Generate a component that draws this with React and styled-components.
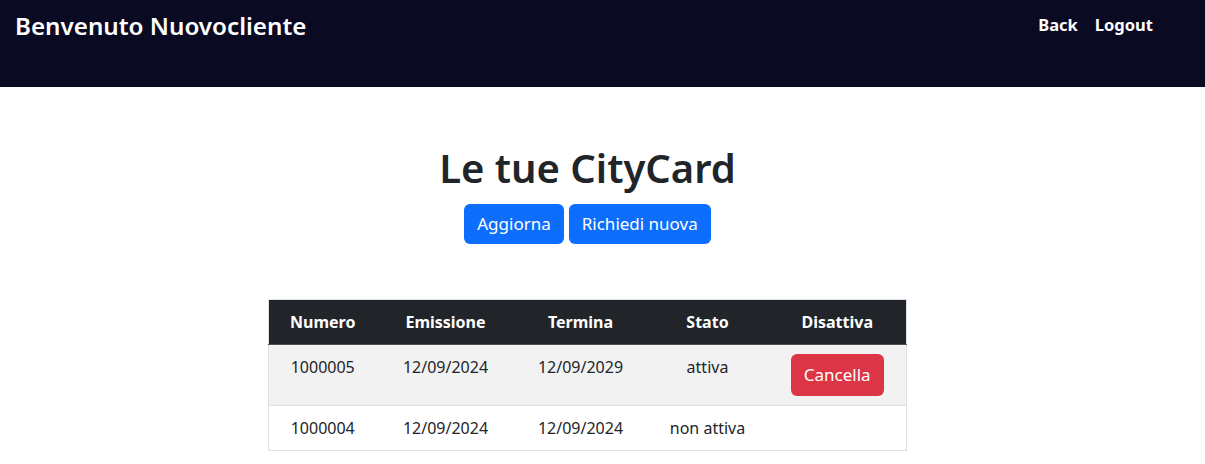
import React from "react";
import styled, { createGlobalStyle } from "styled-components";

const Global = createGlobalStyle`
  html, body { margin: 0; padding: 0; background: #fff; }
  body { font-family: "Noto Sans", "Open Sans", sans-serif; color: #212529; }
  * { box-sizing: border-box; }
`;

const Nav = styled.header`
  height: 87px;
  background: #0a0a23;
  display: flex;
  justify-content: space-between;
  align-items: flex-start;
  padding: 0 52px 0 15px;
`;

const Brand = styled.h2`
  margin: 8px 0 0;
  font-size: 24.2px;
  font-weight: 600;
  line-height: 36px;
  color: #fff;
`;

const NavLinks = styled.nav`
  display: flex;
  gap: 17px;
  margin-top: 12px;
`;

const NavLink = styled.a`
  color: #fff;
  font-weight: 700;
  font-size: 16.5px;
  line-height: 26px;
  text-decoration: none;
  cursor: pointer;
`;

const Main = styled.main`
  display: flex;
  flex-direction: column;
  align-items: center;
  padding: 56px 30px 0 0;
`;

const Title = styled.h1`
  margin: 0 0 11px;
  font-size: 40px;
  font-weight: 600;
  line-height: 50px;
  color: #212529;
`;

const ButtonRow = styled.div`
  display: flex;
  gap: 5px;
`;

const Button = styled.button`
  font-family: inherit;
  font-size: 17px;
  line-height: 24px;
  height: ${(p) => (p.$tall ? "42px" : "40px")};
  padding: 0 13px;
  border: none;
  border-radius: 6px;
  color: #fff;
  background: ${(p) => (p.$variant === "danger" ? "#dc3545" : "#0d6efd")};
  cursor: pointer;
`;

const Table = styled.table`
  margin-top: 55px;
  border-collapse: collapse;
  border: 1px solid #dee2e6;
  table-layout: fixed;
  width: 638px;
  font-size: 16px;
`;

const Th = styled.th`
  background: #212529;
  color: #fff;
  font-weight: 700;
  padding: 9px 4px;
  line-height: 26px;
  text-align: center;
  border-bottom: 1px solid #4d5154;
`;

const Row = styled.tr`
  background: ${(p) => (p.$striped ? "#f2f2f2" : "#fff")};
  border-bottom: 1px solid #dee2e6;
`;

const Td = styled.td`
  padding: 9px 4px;
  line-height: 26px;
  text-align: center;
  vertical-align: top;
  color: #212529;
`;

const widths = [108, 138, 132, 122, 138];
const headers = ["Numero", "Emissione", "Termina", "Stato", "Disattiva"];
const cards = [
  { n: "1000005", e: "12/09/2024", t: "12/09/2029", s: "attiva", active: true },
  { n: "1000004", e: "12/09/2024", t: "12/09/2024", s: "non attiva", active: false },
];

export default function App() {
  return (
    <>
      <Global />
      <Nav>
        <Brand>Benvenuto Nuovocliente</Brand>
        <NavLinks>
          <NavLink>Back</NavLink>
          <NavLink>Logout</NavLink>
        </NavLinks>
      </Nav>
      <Main>
        <Title>Le tue CityCard</Title>
        <ButtonRow>
          <Button>Aggiorna</Button>
          <Button>Richiedi nuova</Button>
        </ButtonRow>
        <Table>
          <colgroup>
            {widths.map((w, i) => (
              <col key={i} style={{ width: w }} />
            ))}
          </colgroup>
          <thead>
            <tr>
              {headers.map((h) => (
                <Th key={h}>{h}</Th>
              ))}
            </tr>
          </thead>
          <tbody>
            {cards.map((c, i) => (
              <Row key={c.n} $striped={i % 2 === 0}>
                <Td>{c.n}</Td>
                <Td>{c.e}</Td>
                <Td>{c.t}</Td>
                <Td>{c.s}</Td>
                <Td>
                  {c.active && (
                    <Button $tall $variant="danger">
                      Cancella
                    </Button>
                  )}
                </Td>
              </Row>
            ))}
          </tbody>
        </Table>
      </Main>
    </>
  );
}
